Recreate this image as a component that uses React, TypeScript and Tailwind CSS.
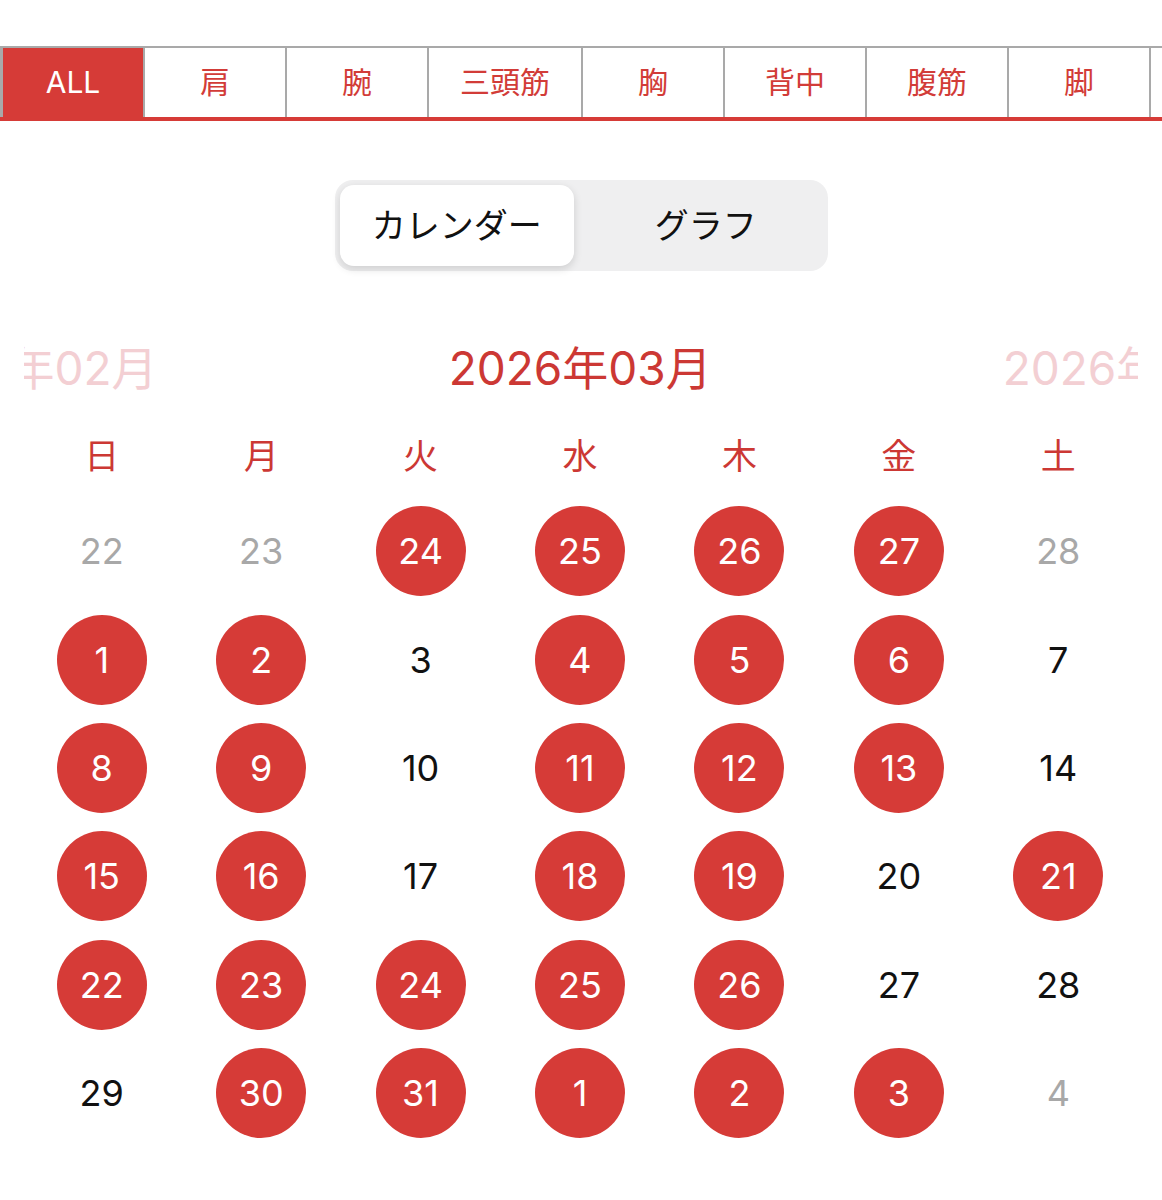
import React from 'react';

const tabs = ['ALL', '肩', '腕', '三頭筋', '胸', '背中', '腹筋', '脚', 'その他'];

type Day = { n: number; kind: 'on' | 'off' | 'plain' };

const on = (n: number): Day => ({ n, kind: 'on' });
const off = (n: number): Day => ({ n, kind: 'off' });
const plain = (n: number): Day => ({ n, kind: 'plain' });

const weeks: Day[][] = [
  [off(22), off(23), on(24), on(25), on(26), on(27), off(28)],
  [on(1), on(2), plain(3), on(4), on(5), on(6), plain(7)],
  [on(8), on(9), plain(10), on(11), on(12), on(13), plain(14)],
  [on(15), on(16), plain(17), on(18), on(19), plain(20), on(21)],
  [on(22), on(23), on(24), on(25), on(26), plain(27), plain(28)],
  [plain(29), on(30), on(31), on(1), on(2), on(3), off(4)],
];

const weekdays = ['日', '月', '火', '水', '木', '金', '土'];

const font = { fontFamily: 'Inter, "Noto Sans CJK JP", sans-serif' };

function TabBar() {
  return (
    <div className="mt-[46px] flex overflow-hidden border-t-2 border-b-4 border-t-[#a9a9a9] border-b-[#d63b37]">
      {tabs.map((t, i) => (
        <div
          key={t}
          className={
            'flex h-[69px] shrink-0 items-center justify-center px-[31px] text-[30px] border-r-2 border-[#a9a9a9] ' +
            (i === 0 ? 'min-w-[145px] border-l-[3px] bg-[#d63b37] text-white' : 'min-w-[142px] bg-white text-[#d23c38]')
          }
        >
          {t}
        </div>
      ))}
    </div>
  );
}

function Segmented() {
  return (
    <div className="mt-[59px] flex justify-center">
      <div className="grid h-[91px] w-[493px] grid-cols-2 rounded-[18px] bg-[#efeff0] p-[5px]">
        <div className="mr-[7px] flex items-center justify-center rounded-[14px] bg-white text-[34px] text-[#111] shadow-[0_3px_8px_rgba(0,0,0,0.14)]">
          カレンダー
        </div>
        <div className="flex items-center justify-center pl-[8px] text-[34px] text-[#111]">グラフ</div>
      </div>
    </div>
  );
}

function MonthHeader() {
  return (
    <div className="mx-[24px] mt-[67px] flex h-[60px] items-center justify-center gap-[291px] overflow-hidden whitespace-nowrap text-[46px]">
      <span className="shrink-0 text-[#f3cfd3]">2026年02月</span>
      <span className="shrink-0 text-[#cc3834]">2026年03月</span>
      <span className="shrink-0 text-[#f3cfd3]">2026年04月</span>
    </div>
  );
}

function Calendar() {
  return (
    <div className="pl-[22px] pr-[24px]">
      <div className="mt-[32px] grid h-[50px] grid-cols-7 items-center">
        {weekdays.map((w) => (
          <div key={w} className="text-center text-[35px] text-[#cc3834]">
            {w}
          </div>
        ))}
      </div>
      <div className="mt-[17px] grid auto-rows-[108.4px] grid-cols-7">
        {weeks.flat().map((d, i) => (
          <div key={i} className="flex items-center justify-center">
            {d.kind === 'on' ? (
              <div className="flex h-[90px] w-[90px] items-center justify-center rounded-full bg-[#d63b37] text-[36px] text-white">
                {d.n}
              </div>
            ) : (
              <div className={'text-[36px] ' + (d.kind === 'off' ? 'text-[#a8a8a8]' : 'text-[#111]')}>{d.n}</div>
            )}
          </div>
        ))}
      </div>
    </div>
  );
}

export default function App() {
  return (
    <div className="min-h-[1200px] w-[1162px] overflow-hidden bg-white" style={font}>
      <TabBar />
      <Segmented />
      <MonthHeader />
      <Calendar />
    </div>
  );
}
